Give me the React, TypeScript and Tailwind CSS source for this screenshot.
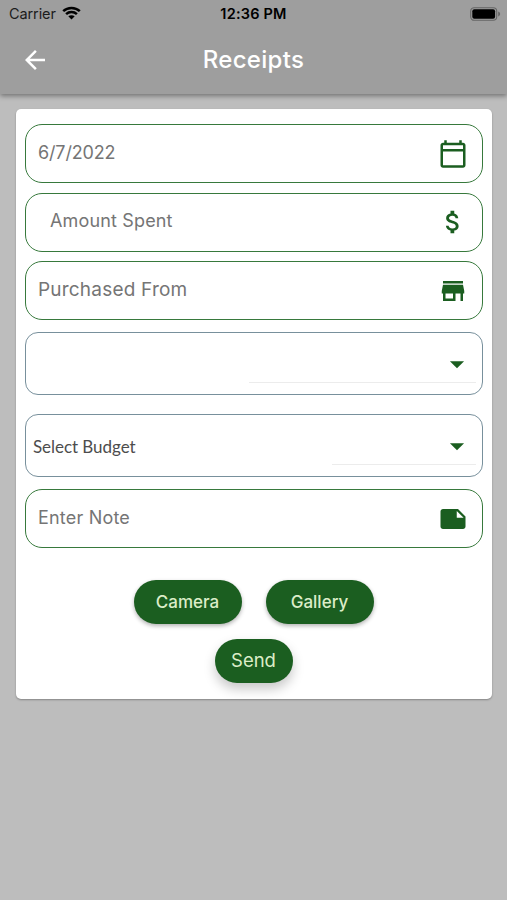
import type { IconType } from "react-icons";
import { MdArrowBack, MdArrowDropDown, MdAttachMoney, MdNote, MdOutlineCalendarToday, MdStore } from "react-icons/md";

function Field({ label, icon: Icon, className = "" }: { label: string; icon: IconType; className?: string }) {
  return (
    <div className={`flex h-[59px] shrink-0 items-center justify-between rounded-[17px] border border-[#37793c] pr-[14px] ${className}`}>
      <span className="-mt-[2px] leading-[26px] text-[#757575]">{label}</span>
      <Icon size={30} className="text-[#1b5e20]" />
    </div>
  );
}

function Dropdown({ label, lineClass }: { label?: string; lineClass: string }) {
  return (
    <div className="relative flex h-[63px] shrink-0 items-center justify-between rounded-[13px] border border-[#78909c] pl-[7px] pr-[8px]">
      <span className="mt-[3px] font-[Lato] text-[17px] tracking-[-0.05px] text-[#4d4d4d]">{label}</span>
      <MdArrowDropDown size={34} className="text-[#1b5e20]" />
      <div className={`absolute bottom-[11px] right-[6px] h-px bg-[#ececec] ${lineClass}`} />
    </div>
  );
}

function StatusBar() {
  return (
    <div className="grid h-[27px] grid-cols-3 items-center text-black">
      <div className="flex items-center gap-[6px] pl-[9px] text-[14.5px] tracking-[-0.1px]">
        <span className="text-[#1c1c1c]">Carrier</span>
        <svg className="-mt-[2px]" width="19" height="14" viewBox="0 0 19 14" fill="none" stroke="currentColor" strokeWidth="2.5">
          <path d="M1.2 5.2C5.8 .8 13.2 .8 17.8 5.2" />
          <path d="M4.1 8.2C7.1 5.4 11.9 5.4 14.9 8.2" />
          <path d="M9.5 13.6L6.3 10.3C8.1 8.8 10.9 8.8 12.7 10.3Z" fill="currentColor" stroke="none" />
        </svg>
      </div>
      <span className="text-center text-[14.5px] font-semibold tracking-[0.2px]">12:36 PM</span>
      <svg className="mr-[6px] justify-self-end" width="31" height="14" viewBox="0 0 31 14">
        <rect x=".7" y=".7" width="26" height="12.6" rx="3.5" fill="none" stroke="#666" strokeWidth="1.1" />
        <rect x="2.3" y="2.3" width="22.8" height="9.4" rx="2" fill="#000" />
        <path d="M28.2 4.6c2.6.8 2.6 4 0 4.8z" fill="#666" />
      </svg>
    </div>
  );
}

export default function App() {
  return (
    <div className="flex h-[900px] w-[507px] flex-col overflow-hidden bg-[#bdbdbd] font-[Inter,sans-serif]">
      <header className="z-10 h-[94px] shrink-0 bg-[#9e9e9e] shadow-[0_2px_5px_rgba(0,0,0,0.4)]">
        <StatusBar />
        <div className="grid h-[66px] grid-cols-[70px_1fr_70px] items-center text-white">
          <button className="justify-self-center"><MdArrowBack size={30} /></button>
          <h1 className="text-center text-[24px] font-medium tracking-[0.3px]">Receipts</h1>
        </div>
      </header>

      <main className="ml-[16px] mr-[15px] mt-[15px] flex h-[590px] flex-col rounded-[5px] bg-white px-[9px] pt-[15px] shadow-[0_1px_2px_rgba(0,0,0,0.3)]">
        <div className="flex flex-col gap-[9.5px]">
          <Field label="6/7/2022" icon={MdOutlineCalendarToday} className="pl-[12px] text-[18px] tracking-[-0.15px]" />
          <Field label="Amount Spent" icon={MdAttachMoney} className="pl-[24px] text-[18px] tracking-[0.15px]" />
          <Field label="Purchased From" icon={MdStore} className="pl-[12px] text-[19px] tracking-[0.2px]" />
        </div>
        <div className="my-[12px] flex flex-col gap-[19px]">
          <Dropdown lineClass="w-[227px]" />
          <Dropdown label="Select Budget" lineClass="w-[144px]" />
        </div>
        <Field label="Enter Note" icon={MdNote} className="pl-[12px] text-[18px] tracking-[0.2px]" />

        <div className="mt-[32px] flex justify-center gap-[24px] text-[17px] font-medium text-[#dcedc8]">
          <button className="h-[44px] w-[108px] rounded-full bg-[#1b5e20] pr-[1px] pt-[1px] shadow-[0_2px_4px_rgba(0,0,0,0.3)]">Camera</button>
          <button className="h-[44px] w-[108px] rounded-full bg-[#1b5e20] pr-[1px] pt-[1px] shadow-[0_2px_4px_rgba(0,0,0,0.3)]">Gallery</button>
        </div>
        <button className="mt-[15px] h-[44px] w-[78px] self-center rounded-full bg-[#1b5e20] pb-[1px] pr-[1px] text-[18.5px] text-[#dcedc8] shadow-[0_6px_12px_rgba(0,0,0,0.22)]">Send</button>
      </main>
    </div>
  );
}
